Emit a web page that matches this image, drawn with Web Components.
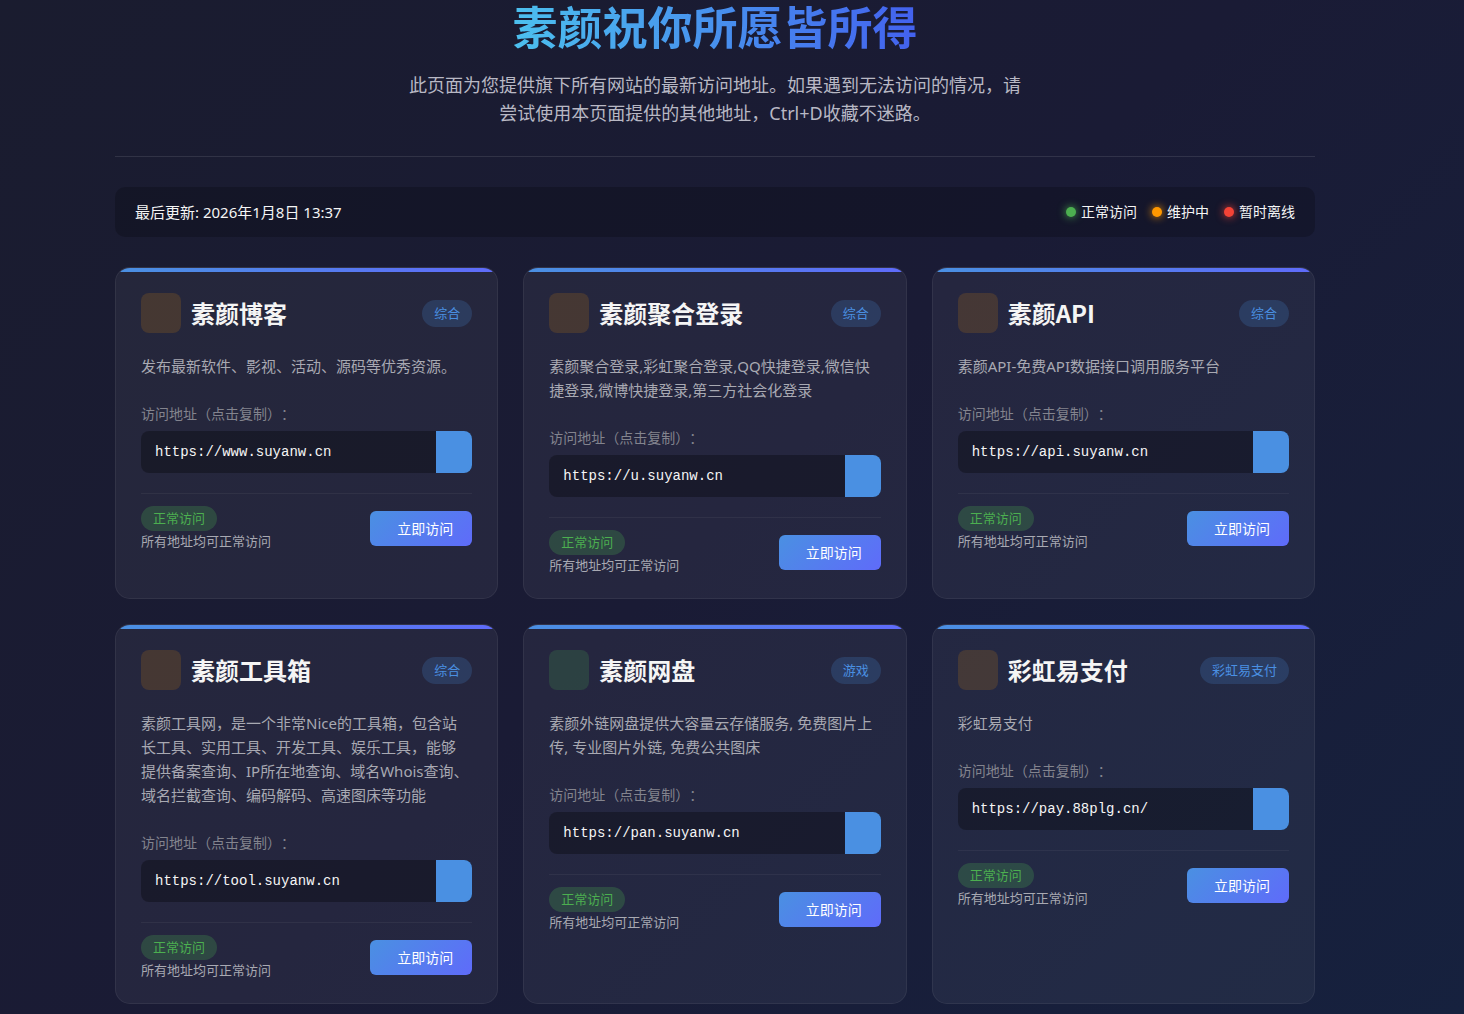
<!DOCTYPE html>
<html lang="zh-CN">
<head>
<meta charset="UTF-8">
<meta name="viewport" content="width=device-width, initial-scale=1.0">
<title>素颜祝你所愿皆所得</title>
<style>
    * {
        box-sizing: border-box;
    }
    body {
        --primary: #4a90e2;
        --secondary: #5f6bfa;
        --online: #4caf50;
        --warning: #ff9800;
        --offline: #f44336;
        margin: 0;
        padding: 0 34px 10px 0;
        min-height: 100vh;
        background: linear-gradient(135deg, #1a1c2f 0%, #1a1b35 50%, #16213e 100%);
        color: #f5f5f5;
        font-family: "Noto Sans", "Noto Sans CJK SC", sans-serif;
        font-size: 15px;
        line-height: 24px;
    }
    main {
        max-width: 1200px;
        margin: 0 auto;
    }
</style>
</head>
<body>
<main>
    <page-header>
        <span slot="title">素颜祝你所愿皆所得</span>
        此页面为您提供旗下所有网站的最新访问地址。如果遇到无法访问的情况，请尝试使用本页面提供的其他地址，Ctrl+D收藏不迷路。
    </page-header>

    <status-bar>
        <span slot="updated">最后更新: 2026年1月8日 13:37</span>
        <status-dot type="online">正常访问</status-dot>
        <status-dot type="warning">维护中</status-dot>
        <status-dot type="offline">暂时离线</status-dot>
    </status-bar>

    <site-grid>
        <site-card url="https://www.suyanw.cn">
            <span slot="name">素颜博客</span>
            <span slot="tag">综合</span>
            发布最新软件、影视、活动、源码等优秀资源。
        </site-card>
        <site-card url="https://u.suyanw.cn">
            <span slot="name">素颜聚合登录</span>
            <span slot="tag">综合</span>
            素颜聚合登录,彩虹聚合登录,QQ快捷登录,微信快捷登录,微博快捷登录,第三方社会化登录
        </site-card>
        <site-card url="https://api.suyanw.cn">
            <span slot="name">素颜API</span>
            <span slot="tag">综合</span>
            素颜API-免费API数据接口调用服务平台
        </site-card>
        <site-card url="https://tool.suyanw.cn">
            <span slot="name">素颜工具箱</span>
            <span slot="tag">综合</span>
            素颜工具网，是一个非常Nice的工具箱，包含站长工具、实用工具、开发工具、娱乐工具，能够提供备案查询、IP所在地查询、域名Whois查询、域名拦截查询、编码解码、高速图床等功能
        </site-card>
        <site-card url="https://pan.suyanw.cn" theme="green">
            <span slot="name">素颜网盘</span>
            <span slot="tag">游戏</span>
            素颜外链网盘提供大容量云存储服务, 免费图片上传, 专业图片外链, 免费公共图床
        </site-card>
        <site-card url="https://pay.88plg.cn/">
            <span slot="name">彩虹易支付</span>
            <span slot="tag">彩虹易支付</span>
            彩虹易支付
        </site-card>
    </site-grid>
</main>

<script>
class PageHeader extends HTMLElement {
    connectedCallback() {
        this.attachShadow({ mode: 'open' });
        this.shadowRoot.innerHTML = `
            <style>
                :host {
                    display: block;
                    margin-bottom: 30px;
                    padding-bottom: 29px;
                    border-bottom: 1px solid rgba(255, 255, 255, 0.1);
                    text-align: center;
                }
                h1 {
                    width: fit-content;
                    margin: 0 auto 11px;
                    font-family: "Liberation Sans", "Noto Sans CJK SC", sans-serif;
                    font-size: 45px;
                    font-weight: 700;
                    line-height: 60px;
                    background: linear-gradient(90deg, #4cc0ee, #4361ee);
                    -webkit-background-clip: text;
                    background-clip: text;
                    color: transparent;
                }
                p {
                    max-width: 620px;
                    margin: 0 auto;
                    font-size: 18px;
                    line-height: 28px;
                    color: #b8b8c4;
                }
            </style>
            <h1><slot name="title"></slot></h1>
            <p><slot></slot></p>
        `;
    }
}
customElements.define('page-header', PageHeader);

class StatusBar extends HTMLElement {
    connectedCallback() {
        this.attachShadow({ mode: 'open' });
        this.shadowRoot.innerHTML = `
            <style>
                :host {
                    display: flex;
                    flex-wrap: wrap;
                    justify-content: space-between;
                    align-items: center;
                    margin-bottom: 30px;
                    padding: 13px 20px;
                    border-radius: 10px;
                    background: rgba(0, 0, 0, 0.2);
                }
                .legend {
                    display: flex;
                    gap: 15px;
                }
            </style>
            <slot name="updated"></slot>
            <div class="legend"><slot></slot></div>
        `;
    }
}
customElements.define('status-bar', StatusBar);

class StatusDot extends HTMLElement {
    connectedCallback() {
        const type = this.getAttribute('type') || 'online';
        this.attachShadow({ mode: 'open' });
        this.shadowRoot.innerHTML = `
            <style>
                :host {
                    display: flex;
                    align-items: center;
                    gap: 5px;
                    font-size: 14px;
                }
                .dot {
                    width: 10px;
                    height: 10px;
                    border-radius: 50%;
                    background: var(--${type});
                    box-shadow: 0 0 8px var(--${type});
                }
            </style>
            <span class="dot"></span>
            <slot></slot>
        `;
    }
}
customElements.define('status-dot', StatusDot);

class SiteGrid extends HTMLElement {
    connectedCallback() {
        this.attachShadow({ mode: 'open' });
        this.shadowRoot.innerHTML = `
            <style>
                :host {
                    display: grid;
                    grid-template-columns: repeat(auto-fill, minmax(350px, 1fr));
                    gap: 25px;
                }
            </style>
            <slot></slot>
        `;
    }
}
customElements.define('site-grid', SiteGrid);

class SiteCard extends HTMLElement {
    connectedCallback() {
        const url = this.getAttribute('url');
        this.attachShadow({ mode: 'open' });
        this.shadowRoot.innerHTML = `
            <style>
                * {
                    box-sizing: border-box;
                }
                :host {
                    display: block;
                    padding: 25px 25px 23px;
                    border: 1px solid rgba(255, 255, 255, 0.06);
                    border-radius: 15px;
                    /* 4px accent strip along the top edge */
                    background:
                        linear-gradient(90deg, var(--primary), var(--secondary)) top / 100% 4px no-repeat padding-box,
                        rgba(255, 255, 255, 0.05);
                }
                .header {
                    display: flex;
                    align-items: center;
                    gap: 10px;
                    margin-bottom: 21px;
                }
                .icon {
                    flex: none;
                    width: 40px;
                    height: 40px;
                    border-radius: 8px;
                    background: rgba(255, 152, 0, 0.15);
                }
                :host([theme="green"]) .icon {
                    background: rgba(76, 175, 80, 0.2);
                }
                h2 {
                    flex: 1;
                    margin: 0;
                    font-family: "Noto Sans CJK SC", sans-serif;
                    font-size: 24px;
                    font-weight: 700;
                    line-height: 40px;
                }
                .tag {
                    padding: 0 12px;
                    border-radius: 20px;
                    background: rgba(74, 144, 226, 0.2);
                    color: var(--primary);
                    font-size: 13px;
                    line-height: 27px;
                }
                .description {
                    margin: 0 0 24px;
                    padding-right: 2px;
                    color: #a8a9b2;
                }
                label {
                    display: block;
                    margin-bottom: 5px;
                    color: #83848e;
                    font-size: 14px;
                    text-spacing-trim: space-all;
                }
                .url {
                    display: flex;
                    height: 42px;
                    margin-bottom: 20px;
                    border-radius: 8px;
                    overflow: hidden;
                    background: rgba(0, 0, 0, 0.3);
                }
                input {
                    flex: 1;
                    min-width: 0;
                    padding: 0 14px;
                    border: 0;
                    outline: 0;
                    background: none;
                    color: #f5f5f5;
                    font-family: "Liberation Mono", monospace;
                    font-size: 14px;
                    cursor: pointer;
                }
                .copy {
                    width: 36px;
                    border: 0;
                    background: var(--primary);
                    cursor: pointer;
                }
                .footer {
                    display: flex;
                    justify-content: space-between;
                    align-items: center;
                    padding-top: 12px;
                    border-top: 1px solid rgba(255, 255, 255, 0.05);
                    font-size: 13px;
                    line-height: 20px;
                    color: #a8a9b2;
                }
                .badge {
                    width: fit-content;
                    padding: 0 12px;
                    border-radius: 20px;
                    background: rgba(76, 175, 80, 0.25);
                    color: var(--online);
                    line-height: 25px;
                }
                .visit {
                    display: flex;
                    gap: 8px;
                    padding: 0 19px;
                    border-radius: 6px;
                    background: linear-gradient(135deg, var(--primary), var(--secondary));
                    color: #fff;
                    font-size: 14px;
                    line-height: 35px;
                    text-decoration: none;
                }
            </style>
            <div class="header">
                <div class="icon"></div>
                <h2><slot name="name"></slot></h2>
                <span class="tag"><slot name="tag"></slot></span>
            </div>
            <p class="description"><slot></slot></p>
            <label for="url">访问地址（点击复制）：</label>
            <div class="url">
                <input id="url" type="text" value="${url}" readonly>
                <button class="copy" type="button" aria-label="复制"></button>
            </div>
            <div class="footer">
                <div>
                    <div class="badge">正常访问</div>
                    <div>所有地址均可正常访问</div>
                </div>
                <a class="visit" href="${url}" target="_blank"><i></i>立即访问</a>
            </div>
        `;

        const input = this.shadowRoot.querySelector('input');
        const copy = () => {
            input.select();
            document.execCommand('copy');
        };
        input.addEventListener('click', copy);
        this.shadowRoot.querySelector('.copy').addEventListener('click', copy);
    }
}
customElements.define('site-card', SiteCard);
</script>
</body>
</html>
